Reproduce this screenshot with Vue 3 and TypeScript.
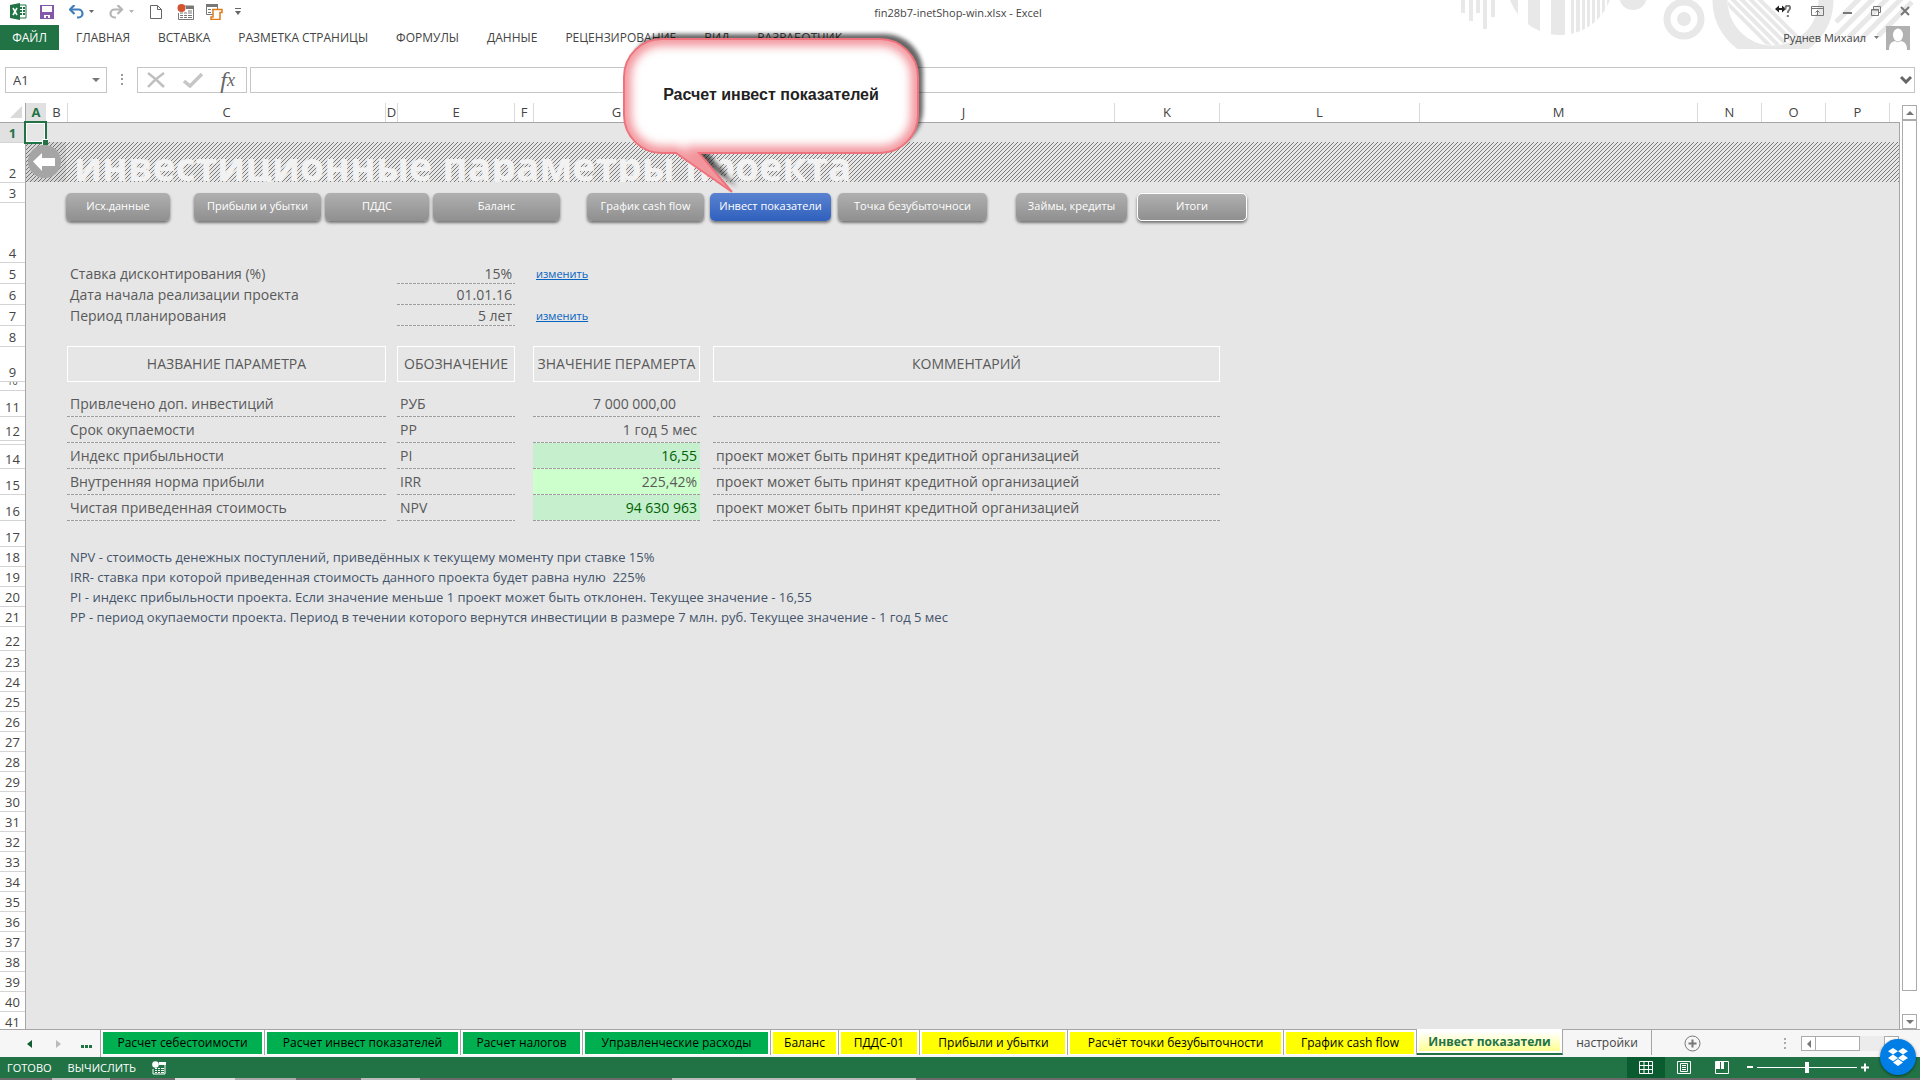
<script setup lang="ts">
import { ref } from 'vue'

interface Column { name: string; width: number }
interface Row { n: number; height: number }
interface NavItem { label: string; width: number; gap: number; kind?: 'current' | 'outlined' }
interface Param { label: string; value: string; link?: boolean }
interface Metric { name: string; code: string; value: string; tone?: string; note: string }
interface SheetTab { label: string; width: number; tone: 'green' | 'yellow' | 'active' | 'plain' }

const ribbon: string[] = [
  'ГЛАВНАЯ', 'ВСТАВКА', 'РАЗМЕТКА СТРАНИЦЫ', 'ФОРМУЛЫ', 'ДАННЫЕ', 'РЕЦЕНЗИРОВАНИЕ', 'ВИД', 'РАЗРАБОТЧИК',
]

const columns: Column[] = [
  { name: 'A', width: 20 }, { name: 'B', width: 22 }, { name: 'C', width: 318 }, { name: 'D', width: 12 },
  { name: 'E', width: 117 }, { name: 'F', width: 19 }, { name: 'G', width: 166 }, { name: 'H', width: 13 },
  { name: 'I', width: 100 }, { name: 'J', width: 302 }, { name: 'K', width: 105 }, { name: 'L', width: 200 },
  { name: 'M', width: 278 }, { name: 'N', width: 64 }, { name: 'O', width: 64 }, { name: 'P', width: 64 },
]

const heights: Record<number, number> = {
  2: 40, 4: 60, 5: 21, 6: 21, 7: 21, 8: 21, 9: 35, 10: 9, 11: 26, 12: 24, 13: 4, 14: 24, 15: 26, 16: 26, 17: 26,
  22: 24, 23: 21,
}
const rows: Row[] = Array.from({ length: 41 }, (_, i) => ({ n: i + 1, height: heights[i + 1] ?? 20 }))

const nav: NavItem[] = [
  { label: 'Исх.данные', width: 104, gap: 0 },
  { label: 'Прибыли и убытки', width: 127, gap: 24 },
  { label: 'ПДДС', width: 104, gap: 4 },
  { label: 'Баланс', width: 127, gap: 4 },
  { label: 'График cash flow', width: 117, gap: 27 },
  { label: 'Инвест показатели', width: 121, gap: 6, kind: 'current' },
  { label: 'Точка безубыточноси', width: 149, gap: 7 },
  { label: 'Займы, кредиты', width: 111, gap: 29 },
  { label: 'Итоги', width: 110, gap: 10, kind: 'outlined' },
]

const params: Param[] = [
  { label: 'Ставка дисконтирования (%)', value: '15%', link: true },
  { label: 'Дата начала реализации проекта', value: '01.01.16' },
  { label: 'Период планирования', value: '5 лет', link: true },
]

const accepted = 'проект может быть принят кредитной организацией'
const metrics: Metric[] = [
  { name: 'Привлечено доп. инвестиций', code: 'РУБ', value: '7 000 000,00', tone: 'inset', note: '' },
  { name: 'Срок окупаемости', code: 'PP', value: '1 год 5 мес', note: '' },
  { name: 'Индекс прибыльности', code: 'PI', value: '16,55', tone: 'good', note: accepted },
  { name: 'Внутренняя норма прибыли', code: 'IRR', value: '225,42%', tone: 'lime', note: accepted },
  { name: 'Чистая приведенная стоимость', code: 'NPV', value: '94 630 963', tone: 'good', note: accepted },
]

const notes: string[] = [
  'NPV - стоимость денежных поступлений, приведённых к текущему моменту при ставке 15%',
  'IRR- ставка при которой приведенная стоимость данного проекта будет равна нулю  225%',
  'PI - индекс прибыльности проекта. Если значение меньше 1 проект может быть отклонен. Текущее значение - 16,55',
  'PP - период окупаемости проекта. Период в течении которого вернутся инвестиции в размере 7 млн. руб. Текущее значение - 1 год 5 мес',
]

const sheets: SheetTab[] = [
  { label: 'Расчет себестоимости', width: 164, tone: 'green' },
  { label: 'Расчет инвест показателей', width: 196, tone: 'green' },
  { label: 'Расчет налогов', width: 122, tone: 'green' },
  { label: 'Управленческие расходы', width: 188, tone: 'green' },
  { label: 'Баланс', width: 68, tone: 'yellow' },
  { label: 'ПДДС-01', width: 81, tone: 'yellow' },
  { label: 'Прибыли и убытки', width: 148, tone: 'yellow' },
  { label: 'Расчёт точки безубыточности', width: 216, tone: 'yellow' },
  { label: 'График cash flow', width: 133, tone: 'yellow' },
  { label: 'Инвест показатели', width: 146, tone: 'active' },
  { label: 'настройки', width: 89, tone: 'plain' },
]

const cellName = ref('A1')
const formula = ref('')
const zoom = ref(50)
const px = (v: number): string => `${v}px`
</script>

<template>
  <div class="app">
    <svg class="decor" width="460" height="49" viewBox="1460 0 460 49" aria-hidden="true">
      <defs>
        <clipPath id="disc"><circle cx="1560" cy="-18" r="53" /></clipPath>
        <clipPath id="hole"><circle cx="1773" cy="0" r="45" /></clipPath>
      </defs>
      <g fill="#e8e8e8">
        <path d="M1461 0h4v13h-4zM1469 0h4v21h-4zM1476 0h4v13h-4zM1483 0h4v29h-4zM1491 0h4v17h-4z" />
        <g clip-path="url(#disc)">
          <path d="M1500 0h18v36h-18zM1528 0h12v36h-12zM1551 0h14v36h-14zM1571 0h3v36h-3zM1576 0h4v36h-4zM1582 0h3v36h-3zM1587 0h3v36h-3zM1592 0h3v36h-3zM1597 0h3v36h-3zM1602 0h3v36h-3zM1607 0h3v36h-3z" />
        </g>
        <circle cx="1633" cy="-4" r="14" />
        <circle cx="1684" cy="19" r="7" />
      </g>
      <circle cx="1684" cy="19" r="17" fill="none" stroke="#e8e8e8" stroke-width="7" />
      <circle cx="1773" cy="0" r="53" fill="none" stroke="#e8e8e8" stroke-width="15" />
      <g stroke="#e8e8e8" stroke-width="4" clip-path="url(#hole)">
        <path d="M1716-8l60 60M1725-8l60 60M1734-8l60 60M1743-8l60 60M1752-8l60 60" />
      </g>
      <g stroke="#e8e8e8" stroke-width="5">
        <path d="M1862-4l-26 26M1876-4l-40 40M1890-4l-42 42M1904-4l-46 46M1912 2l-34 34" />
      </g>
    </svg>

    <header class="titlebar">
      <div class="quick">
        <svg class="q-excel" width="17" height="17" viewBox="0 0 17 17" aria-hidden="true">
          <path d="M9 2h7v13H9z" fill="#fff" stroke="#217346" />
          <path d="M10 4h2v2h-2zM13 4h2v2h-2zM10 7h2v2h-2zM13 7h2v2h-2zM10 10h2v2h-2zM13 10h2v2h-2z" fill="#217346" />
          <path d="M0 2l10-2v17L0 15z" fill="#217346" />
          <path d="M3 5l4 7M7 5l-4 7" stroke="#fff" stroke-width="1.6" />
        </svg>
        <button class="q-btn q-save" aria-label="Сохранить">
          <svg width="14" height="14" viewBox="0 0 14 14"><path d="M0 0h14v14H0z" fill="#8457a8" /><path d="M2 1h10v6H2zM4 10h6v3H8v-2H6v2H4z" fill="#fff" /></svg>
        </button>
        <button class="q-btn q-undo" aria-label="Отменить">
          <svg width="25" height="14" viewBox="0 0 25 14"><path d="M1 4.500h8.500a4 4 0 0 1 0 8H8" fill="none" stroke="#3e7cba" stroke-width="2.200" /><path d="M5.500 0L1 4.500 5.500 9" fill="none" stroke="#3e7cba" stroke-width="2.200" /><path d="M20 5h5l-2.500 3z" fill="#666" /></svg>
        </button>
        <button class="q-btn q-redo" aria-label="Вернуть">
          <svg width="25" height="14" viewBox="0 0 25 14"><path d="M13 4.500H5.500a4 4 0 0 0 0 8H7" fill="none" stroke="#b5b5b5" stroke-width="2.200" /><path d="M8.500 0L13 4.500 8.500 9" fill="none" stroke="#b5b5b5" stroke-width="2.200" /><path d="M20 5h5l-2.500 3z" fill="#b5b5b5" /></svg>
        </button>
        <button class="q-btn q-new" aria-label="Создать">
          <svg width="12" height="14" viewBox="0 0 12 14"><path d="M.5.5h7l4 4v9H.5zM7.500.5v4h4" fill="none" stroke="#666" /></svg>
        </button>
        <button class="q-btn q-macro" aria-label="Запись макроса">
          <svg width="17" height="16" viewBox="0 0 17 16"><path d="M8 2h8.500v13.500H1.500V9" fill="none" stroke="#777" /><path d="M9 2h8v3H9z" fill="#777" /><path d="M3 9h3M7 9h3M11 9h4M3 11.500h3M7 11.500h3M11 11.500h4M3 13.500h3M7 13.500h3M11 13.500h4M11 7h4" stroke="#777" /><circle cx="4.500" cy="4" r="4" fill="#d35230" /></svg>
        </button>
        <button class="q-btn q-script" aria-label="Макросы">
          <svg width="17" height="16" viewBox="0 0 17 16"><path d="M.5.5h11v10H.5z" fill="#fff" stroke="#777" /><path d="M0 0h12v3H0zM2 5h3v1H2zM6 5h4v1H6zM2 8h3v1H2z" fill="#777" /><path d="M7 5.500h9v3h-2v7H5v-2.500h2z" fill="#fff" stroke="#e07b1a" stroke-width="1.500" /></svg>
        </button>
        <button class="q-btn q-more" aria-label="Настройка панели">
          <svg width="6" height="7" viewBox="0 0 6 7"><path d="M0 0h6v1H0zM0 3h6L3 7z" fill="#666" /></svg>
        </button>
      </div>
      <div class="doc-title">fin28b7-inetShop-win.xlsx - Excel</div>
      <div class="win">
        <button class="q-btn" aria-label="Справка">
          <svg width="17" height="13" viewBox="0 0 17 13"><path d="M0 4l4-3.500V3h3V.5L11 4 7 7.500V5H4v2.500z" fill="#222" /><path d="M10.500 4.500V3a2.300 2.300 0 0 1 4.600 0c0 2-2.300 2-2.300 5M12.800 10v2" fill="none" stroke="#777" stroke-width="2" /></svg>
        </button>
        <button class="q-btn" aria-label="Параметры ленты">
          <svg width="13" height="10" viewBox="0 0 13 10"><path d="M.5.5h12v9H.5zM.5 2.500h12M6.500 9V4.500M4.500 6.500l2-2 2 2" fill="none" stroke="#777" /></svg>
        </button>
        <button class="q-btn" aria-label="Свернуть"><svg width="9" height="10" viewBox="0 0 9 10"><path d="M0 6h9v2H0z" fill="#777" /></svg></button>
        <button class="q-btn" aria-label="Восстановить">
          <svg width="10" height="10" viewBox="0 0 10 10"><path d="M2.500 3V.5h7v6H8" fill="none" stroke="#777" /><path d="M.5 3.500h7v6h-7zM0 4h8" fill="none" stroke="#777" /></svg>
        </button>
        <button class="q-btn" aria-label="Закрыть"><svg width="10" height="10" viewBox="0 0 10 10"><path d="M1 1l8 8M9 1L1 9" stroke="#777" stroke-width="2" /></svg></button>
      </div>
    </header>

    <nav class="ribbon">
      <button class="file">ФАЙЛ</button>
      <button v-for="tab in ribbon" :key="tab" class="rtab">{{ tab }}</button>
      <button class="user">
        Руднев Михаил
        <svg width="5" height="3" viewBox="0 0 5 3" aria-hidden="true"><path d="M0 0h5L2.500 3z" fill="#777" /></svg>
      </button>
      <svg class="avatar" width="24" height="24" viewBox="0 0 24 24" aria-hidden="true">
        <path d="M0 0h24v24H0z" fill="#b1b1b1" />
        <ellipse cx="12" cy="9" rx="5" ry="6.500" fill="#fff" />
        <path d="M3 24c0-6 2-8 6-9 1.500 1.500 4.500 1.500 6 0 4 1 6 3 6 9z" fill="#fff" />
      </svg>
    </nav>

    <div class="formula">
      <div class="namebox">
        <input v-model="cellName" aria-label="Имя ячейки" />
        <svg width="8" height="4" viewBox="0 0 8 4" aria-hidden="true"><path d="M0 0h8L4 4z" fill="#777" /></svg>
      </div>
      <svg class="dots" width="2" height="11" viewBox="0 0 2 11" aria-hidden="true"><path d="M0 0h2v2H0zM0 4h2v2H0zM0 9h2v2H0z" fill="#999" /></svg>
      <div class="fxbox">
        <button class="q-btn" aria-label="Отмена"><svg width="18" height="16" viewBox="0 0 18 16"><path d="M1 1q8 6 16 14M17 1Q8 7 1 15" fill="none" stroke="#c0c0c0" stroke-width="2.500" /></svg></button>
        <button class="q-btn" aria-label="Ввод"><svg width="20" height="16" viewBox="0 0 20 16"><path d="M1 9l6 5L19 2" fill="none" stroke="#c6c6c6" stroke-width="3.500" /></svg></button>
        <button class="q-btn fx" aria-label="Вставить функцию">f<span>x</span></button>
      </div>
      <div class="fline">
        <input v-model="formula" aria-label="Строка формул" />
        <svg width="12" height="9" viewBox="0 0 12 9" aria-hidden="true"><path d="M1 2l5 5 5-5" fill="none" stroke="#666" stroke-width="3" /></svg>
      </div>
    </div>

    <main class="grid">
      <div class="left">
        <div class="corner"><svg width="12" height="12" viewBox="0 0 12 12" aria-hidden="true"><path d="M12 0v12H0z" fill="#dadada" /></svg></div>
        <div v-for="row in rows" :key="row.n" class="rowhead" :class="{ picked: row.n === 1, thin: row.height < 10 }" :style="{ height: px(row.height) }">
          <template v-if="row.n !== 13">{{ row.n }}</template>
        </div>
      </div>

      <div class="sheet">
        <div class="colheads">
          <div v-for="col in columns" :key="col.name" class="colhead" :class="{ picked: col.name === 'A' }" :style="{ width: px(col.width) }">{{ col.name }}</div>
        </div>
        <div class="cursor"><i></i></div>
        <div class="cells">
          <div class="banner">
            <svg class="hatch" width="100%" height="40" aria-hidden="true">
              <defs>
                <pattern id="stripes" width="4" height="4" patternUnits="userSpaceOnUse">
                  <path d="M3 0h1v1H3zM2 1h1v1H2zM1 2h1v1H1zM0 3h1v1H0z" fill="#7c7c7c" shape-rendering="crispEdges" />
                </pattern>
              </defs>
              <rect width="100%" height="40" fill="url(#stripes)" />
            </svg>
            <button class="back" aria-label="Назад">
              <svg width="33" height="33" viewBox="0 0 33 33">
                <circle cx="16.500" cy="16.500" r="16.500" fill="#a5a5a5" />
                <path d="M5 16.500L14 8v5h13v8H14v5z" fill="#fff" />
              </svg>
            </button>
            <h1>инвестиционные параметры проекта</h1>
          </div>

          <div class="nav">
            <button v-for="item in nav" :key="item.label" class="navbtn" :class="item.kind" :style="{ width: px(item.width), marginLeft: px(item.gap) }">{{ item.label }}</button>
          </div>

          <table class="params">
            <tbody>
              <tr v-for="p in params" :key="p.label">
                <th scope="row">{{ p.label }}</th>
                <td class="dashed">{{ p.value }}</td>
                <td class="change"><a v-if="p.link" href="#">изменить</a></td>
              </tr>
            </tbody>
          </table>

          <table class="metrics">
            <colgroup><col class="c1" /><col class="g1" /><col class="c2" /><col class="g2" /><col class="c3" /><col class="g3" /><col class="c4" /></colgroup>
            <thead>
              <tr>
                <th>НАЗВАНИЕ ПАРАМЕТРА</th><td></td><th>ОБОЗНАЧЕНИЕ</th><td></td><th>ЗНАЧЕНИЕ ПЕРАМЕРТА</th><td></td><th>КОММЕНТАРИЙ</th>
              </tr>
            </thead>
            <tbody>
              <tr v-for="m in metrics" :key="m.code">
                <td class="dashed">{{ m.name }}</td><td></td>
                <td class="dashed">{{ m.code }}</td><td></td>
                <td class="dashed value" :class="m.tone">{{ m.value }}</td><td></td>
                <td class="dashed">{{ m.note }}</td>
              </tr>
            </tbody>
          </table>

          <div class="notes"><p v-for="n in notes" :key="n">{{ n }}</p></div>
        </div>
      </div>

      <div class="vscroll">
        <button class="sbtn" aria-label="Вверх"><svg width="8" height="4" viewBox="0 0 8 4"><path d="M0 4h8L4 0z" fill="#777" /></svg></button>
        <div class="vthumb"></div>
        <button class="sbtn down" aria-label="Вниз"><svg width="8" height="4" viewBox="0 0 8 4"><path d="M0 0h8L4 4z" fill="#777" /></svg></button>
      </div>
    </main>

    <footer class="tabs">
      <div class="tabnav">
        <button class="q-btn" aria-label="Предыдущий лист"><svg width="5" height="8" viewBox="0 0 5 8"><path d="M5 0v8L0 4z" fill="#0e5c2f" /></svg></button>
        <button class="q-btn" aria-label="Следующий лист"><svg width="5" height="8" viewBox="0 0 5 8"><path d="M0 0v8l5-4z" fill="#bbb" /></svg></button>
        <button class="q-btn ell" aria-label="Все листы"><svg width="11" height="3" viewBox="0 0 11 3"><path d="M0 0h3v3H0zM4 0h3v3H4zM8 0h3v3H8z" fill="#217346" /></svg></button>
      </div>
      <div v-for="s in sheets" :key="s.label" class="tab" :class="s.tone" :style="{ width: px(s.width) }">
        <button>{{ s.label }}</button>
      </div>
      <button class="q-btn add" aria-label="Новый лист"><svg width="17" height="17" viewBox="0 0 17 17"><circle cx="8.500" cy="8.500" r="7.500" fill="none" stroke="#777" /><path d="M8.500 4.500v8M4.500 8.500h8" stroke="#777" stroke-width="2" /></svg></button>
      <div class="hscroll">
        <svg width="2" height="11" viewBox="0 0 2 11" aria-hidden="true"><path d="M0 0h2v2H0zM0 4h2v2H0zM0 9h2v2H0z" fill="#aaa" /></svg>
        <button class="sbtn first" aria-label="Влево"><svg width="4" height="8" viewBox="0 0 4 8"><path d="M4 0v8L0 4z" fill="#777" /></svg></button>
        <div class="hthumb"></div>
        <div class="htrack"></div>
        <button class="sbtn" aria-label="Вправо"><svg width="4" height="8" viewBox="0 0 4 8"><path d="M0 0v8l4-4z" fill="#777" /></svg></button>
      </div>
    </footer>

    <div class="status">
      <span>ГОТОВО</span>
      <span>ВЫЧИСЛИТЬ</span>
      <svg width="14" height="14" viewBox="0 0 14 14" aria-hidden="true"><path d="M7 1.500h6v11.500H1V8" fill="none" stroke="#fff" /><path d="M7 1h7v3H7zM3 7h2v1H3zM6 7h2v1H6zM9 7h3v1H9zM3 9h2v1H3zM6 9h2v1H6zM9 9h3v1H9zM3 11h2v1H3zM6 11h2v1H6zM9 11h3v1H9z" fill="#fff" /><circle cx="3.500" cy="3.500" r="3.300" fill="#fff" /></svg>
      <div class="views">
        <button class="view on" aria-label="Обычный"><svg width="14" height="13" viewBox="0 0 14 13"><path d="M.5.5h13v12H.5zM5 0v13M9.500 0v13M0 4.500h14M0 8.500h14" fill="none" stroke="#fff" /></svg></button>
        <button class="view" aria-label="Разметка страницы"><svg width="14" height="13" viewBox="0 0 14 13"><path d="M.5.5h13v12H.5zM3.500 2.500h7v8h-7zM5 4.500h4M5 6.500h4M5 8.500h4" fill="none" stroke="#fff" /></svg></button>
        <button class="view" aria-label="Страничный режим"><svg width="14" height="13" viewBox="0 0 14 13"><path d="M.5.5h13v12H.5z" fill="none" stroke="#fff" /><path d="M1 1h4v7H1zM6 1h3v7H6z" fill="#fff" /></svg></button>
      </div>
      <button class="q-btn" aria-label="Уменьшить"><svg width="6" height="9" viewBox="0 0 6 9"><path d="M0 3h6v2H0z" fill="#fff" /></svg></button>
      <input v-model="zoom" class="zoom" type="range" min="0" max="100" aria-label="Масштаб" />
      <button class="q-btn" aria-label="Увеличить"><svg width="8" height="9" viewBox="0 0 8 9"><path d="M0 3.500h8v2H0zM3 .5h2v8H3z" fill="#fff" /></svg></button>
    </div>
    <div class="taskbar"></div>

    <div class="callout">
      <svg width="320" height="180" viewBox="0 0 320 180" aria-hidden="true">
        <defs>
          <path id="bubble" d="M44 19H260A38 38 0 0 1 298 57V95A38 38 0 0 1 260 133H79L112 172L56 133H44A38 38 0 0 1 4 95V57A38 38 0 0 1 44 19Z" />
          <clipPath id="inside"><use href="#bubble" /></clipPath>
          <filter id="glow" x="-20%" y="-20%" width="140%" height="140%"><feGaussianBlur stdDeviation="5" /></filter>
          <filter id="shade" x="-20%" y="-20%" width="140%" height="140%"><feGaussianBlur stdDeviation="2" /></filter>
        </defs>
        <use href="#bubble" transform="translate(5 -5)" fill="#000" opacity="0.6" filter="url(#shade)" />
        <use href="#bubble" fill="#fff" />
        <g clip-path="url(#inside)">
          <use href="#bubble" fill="none" stroke="#f2949b" stroke-width="14" filter="url(#glow)" />
        </g>
        <use href="#bubble" fill="none" stroke="#ee737c" stroke-width="2" />
      </svg>
      <strong>Расчет инвест показателей</strong>
    </div>

    <button class="dropbox" aria-label="Dropbox">
      <svg width="20" height="19" viewBox="0 0 20 19"><path d="M5 0l5 3.300-5 3.300-5-3.300zM15 0l5 3.300-5 3.300-5-3.300zM5 6.600l5 3.300-5 3.300-5-3.300zM15 6.600l5 3.300-5 3.300-5-3.300zM10 11l5 3.500-5 3.500-5-3.500z" fill="#fff" /></svg>
    </button>
  </div>
</template>

<style>
body { margin: 0; background: #fff; }
</style>

<style scoped>
.app {
  position: relative;
  display: flex;
  flex-direction: column;
  height: 100vh;
  overflow: hidden;
  background: #fff;
  color: #444;
  font: 12px/16px "Open Sans", "Noto Sans", sans-serif;
}
.app *, .app *::before { box-sizing: border-box; }
button { padding: 0; border: 0; background: none; color: inherit; font: inherit; cursor: pointer; white-space: nowrap; }
input { border: 0; background: none; outline: 0; color: inherit; font: inherit; padding: 0; min-width: 0; }
svg { display: block; flex: none; }
table { border-collapse: separate; border-spacing: 0; table-layout: fixed; }
.q-btn { display: flex; align-items: center; }

.decor { position: absolute; top: 0; right: 0; }

.titlebar { position: relative; display: flex; justify-content: space-between; height: 25px; flex: none; }
.quick { display: flex; align-items: center; padding-left: 10px; height: 23px; }
.q-save { margin-left: 13px; }
.q-undo { margin-left: 15px; }
.q-redo { margin-left: 15px; }
.q-new { margin-left: 16px; }
.q-macro { margin-left: 15px; }
.q-script { margin-left: 12px; }
.q-more { margin-left: 12px; }
.doc-title { position: absolute; left: 0; right: 4px; top: 5px; text-align: center; font-size: 11px; pointer-events: none; }
.win { display: flex; align-items: center; gap: 19px; height: 22px; padding-right: 10px; }

.ribbon { position: relative; display: flex; align-items: center; height: 25px; flex: none; }
.file { width: 59px; height: 25px; background: #217346; color: #fff; margin-right: 3px; }
.rtab { padding: 0 14px; }
.user { display: flex; align-items: center; gap: 8px; margin-left: auto; margin-right: 7px; font-size: 11px; }
.avatar { margin-right: 10px; }

.formula { display: flex; align-items: center; height: 53px; padding: 6px 5px 0; flex: none; }
.namebox, .fxbox, .fline { display: flex; align-items: center; height: 26px; border: 1px solid #c6c6c6; background: #fff; }
.namebox { width: 102px; padding: 0 6px 0 7px; font-size: 13px; }
.namebox input { flex: 1; }
.dots { margin: 0 14px; }
.fxbox { width: 110px; padding: 0 11px 0 9px; justify-content: space-between; }
.fx { font: italic 24px/24px "Liberation Serif", serif; color: #666; }
.fx span { font-size: 18px; }
.fline { flex: 1; margin-left: 3px; padding: 0 2px 0 6px; }
.fline input { flex: 1; }

.grid { display: flex; flex: 1; min-height: 0; border-bottom: 1px solid #a6a6a6; }
.left { width: 26px; flex: none; overflow: hidden; border-right: 1px solid #a6a6a6; }
.corner { display: flex; align-items: flex-end; justify-content: flex-end; height: 20px; padding: 0 3px 4px 0; border-bottom: 1px solid #a6a6a6; }
.rowhead { display: flex; align-items: flex-end; justify-content: center; border-bottom: 1px solid #d4d4d4; font-size: 13px; line-height: 18px; overflow: hidden; }
.rowhead.thin { align-items: flex-start; font-size: 9px; line-height: 0; }
.picked { background: #e1e1e1; color: #217346; font-weight: 700; }
.sheet { position: relative; flex: 1; min-width: 0; display: flex; flex-direction: column; }
.colheads { display: flex; height: 20px; flex: none; border-bottom: 1px solid #a6a6a6; overflow: hidden; }
.colhead { flex: none; text-align: center; font-size: 13px; line-height: 19px; border-right: 1px solid #dadada; }
.colhead.picked { border-right: 0; }
.cells { flex: 1; min-height: 0; padding-top: 19px; background: #e6e6e6; border-right: 1px solid #a6a6a6; overflow: hidden; }

.cursor { position: absolute; z-index: 2; left: -2px; top: 18px; width: 23px; height: 23px; border: 2px solid #217346; box-shadow: inset 0 0 0 1px #fff; }
.cursor i { position: absolute; right: -3px; bottom: -3px; width: 6px; height: 6px; background: #217346; border: solid #fff; border-width: 1px 0 0 1px; }

.banner { position: relative; display: flex; align-items: flex-start; height: 40px; overflow: hidden; }
.hatch { position: absolute; left: 0; top: 0; }
.back { position: relative; display: flex; align-items: flex-start; width: 40px; height: 40px; padding: 3px 0 0 2px; background: rgb(0 0 0 / 7%); }
h1 { position: relative; margin: 0; padding-left: 8px; color: #f2f2f2; font-size: 39px; line-height: 48px; font-weight: 700; white-space: nowrap; }

.nav { display: flex; align-items: flex-start; height: 81px; padding: 11px 0 0 40px; }
.navbtn { flex: none; height: 28px; padding-bottom: 2px; border-radius: 5px; background: linear-gradient(#b0b0b0, #8f8f8f); color: #fff; font-size: 11px; line-height: 24px; box-shadow: 0 2px 3px rgb(0 0 0 / 50%); }
.navbtn.current { background: linear-gradient(#5a83d0, #2f60bd); }
.navbtn.outlined { border: 1px solid #fff; }

.params, .metrics { margin-left: 41px; color: #595959; font-size: 14px; line-height: 20px; }
.params { width: 569px; }
.params tr { height: 21px; }
.params th { width: 330px; padding: 0 0 0 3px; font-weight: 400; text-align: left; }
.params td { padding: 0 3px; text-align: right; }
.params .dashed { width: 118px; }
.params .change { padding: 1px 0 0 21px; text-align: left; font-size: 11px; }
.change a { color: #0563c1; }
.dashed { background: repeating-linear-gradient(90deg, #9c9c9c 0 3px, #f4f4f4 3px 4px) left bottom / 100% 1px no-repeat; }

.metrics { width: 1153px; margin-top: 20px; }
.c1 { width: 319px; } .g1 { width: 11px; } .c2 { width: 118px; } .g2 { width: 18px; }
.c3 { width: 167px; } .g3 { width: 13px; } .c4 { width: 507px; }
.metrics th { height: 36px; padding: 0; border: 1px solid #fff; font-weight: 400; white-space: nowrap; }
.metrics tbody::before { content: ""; display: block; height: 9px; }
.metrics tbody tr { height: 26px; }
.metrics td { padding: 0 3px; }
.metrics tbody td { white-space: nowrap; }
.value { text-align: right; }
.metrics .inset { padding-right: 24px; }
.good { background-color: #c6efce; color: #006100; }
.lime { background-color: #ccffcc; }

.notes { margin: 26px 0 0 44px; color: #44546a; font-size: 13px; line-height: 20px; white-space: pre; }
.notes p { margin: 0; }

.vscroll { display: flex; flex-direction: column; width: 20px; flex: none; padding: 2px 3px 0 2px; background: #fff; }
.sbtn { display: flex; align-items: center; justify-content: center; width: 15px; height: 15px; flex: none; border: 1px solid #ababab; background: #fff; }
.vthumb { flex: 1; border: 1px solid #ababab; background: #fff; }
.down { margin-top: 23px; }

.tabs { display: flex; height: 27px; flex: none; background: #f6f6f6; }
.tabnav { display: flex; align-items: center; width: 101px; padding-left: 27px; gap: 24px; border-right: 1px solid #a6a6a6; }
.ell { padding-top: 6px; margin-left: -4px; }
.tab { flex: none; height: 25px; padding: 2px 2px 1px; border-right: 1px solid #a6a6a6; background: #fff; font-size: 12px; color: #000; }
.tab button { display: block; width: 100%; height: 22px; }
.green button { background: #00b050; }
.yellow button { background: #ff0; }
.tab.active { margin-top: -1px; height: 26px; padding: 3px 2px 2px; border-bottom: 2px solid #217346; }
.active button { height: 19px; background: linear-gradient(#fff, #ffff90); color: #217346; font-weight: 700; }
.tab.plain { background: none; color: #444; }
.add { margin-left: 32px; }
.hscroll { display: flex; align-items: center; margin-left: auto; padding-right: 21px; }
.first { margin-left: 15px; }
.hthumb { width: 44px; height: 15px; border: 1px solid #ababab; border-left: 0; background: #fff; }
.htrack { width: 24px; height: 15px; background: #ececec; }

.status { display: flex; align-items: center; gap: 16px; height: 21px; flex: none; padding: 0 51px 0 7px; background: #217346; color: #fff; font-size: 11px; }
.views { display: flex; margin-left: auto; margin-right: -10px; }
.view { display: flex; align-items: center; justify-content: center; width: 38px; height: 21px; }
.view.on { background: #0a5c30; }
.status .q-btn + .zoom { margin-left: -12px; }
.zoom { -webkit-appearance: none; appearance: none; width: 100px; height: 11px; margin: 0 -12px 0 0; background: linear-gradient(#fff, #fff) center / 100% 1px no-repeat; }
.zoom::-webkit-slider-thumb { -webkit-appearance: none; width: 4px; height: 11px; background: #fff; }
.taskbar { height: 2px; flex: none; background: linear-gradient(90deg, #6a6a6a 0 52px, #bbb 52px 110px, #6a6a6a 110px 175px, #ddd 175px 235px, #aaa 235px 296px, #6a6a6a 296px 361px, #bbb 361px 420px, #6a6a6a 420px 672px, #bbb 672px 916px, #6a6a6a 916px); }

.callout { position: absolute; left: 620px; top: 20px; width: 320px; height: 180px; }
.callout strong { position: absolute; left: 4px; top: 65px; width: 294px; text-align: center; color: #222; font: 700 16px/20px "Liberation Sans", Arial, sans-serif; }
.callout svg { position: absolute; left: 0; top: 0; }

.dropbox { position: absolute; right: 4px; bottom: 5px; display: flex; align-items: center; justify-content: center; width: 36px; height: 36px; border-radius: 50%; background: #007ee5; box-shadow: 0 1px 3px rgb(0 0 0 / 50%); }
</style>
